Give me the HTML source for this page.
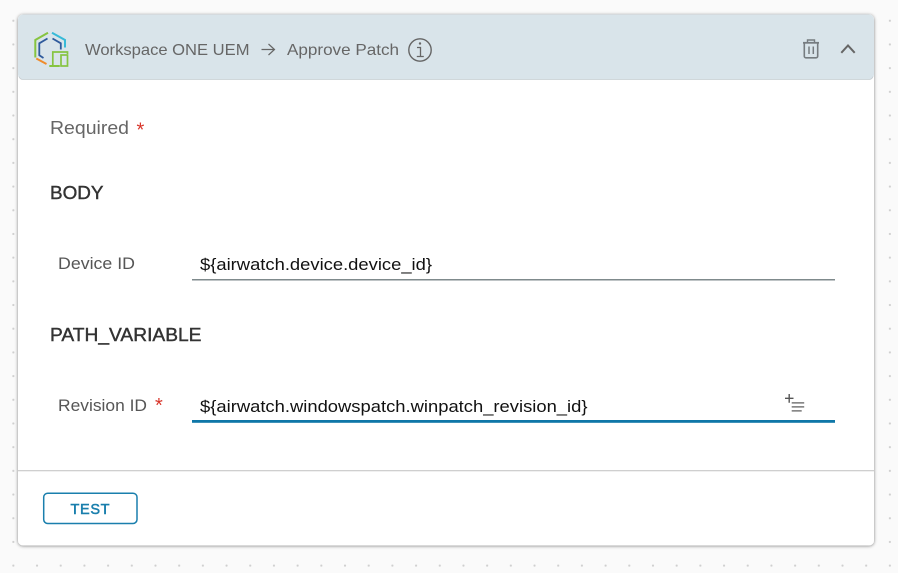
<!DOCTYPE html>
<html>
<head>
<meta charset="utf-8">
<style>
html,body{margin:0;padding:0;width:898px;height:573px;overflow:hidden;background:#fafafa}
svg{display:block}
text{font-family:"Liberation Sans",sans-serif}
</style>
</head>
<body>
<svg width="898" height="573" viewBox="0 0 898 573" xmlns="http://www.w3.org/2000/svg">
<defs>
<pattern id="dots" x="1.5" y="8.9" width="23.69" height="23.69" patternUnits="userSpaceOnUse">
<circle cx="11.85" cy="11.85" r="1.1" fill="#cfcfcf"/>
</pattern>
<filter id="sh" x="-3%" y="-3%" width="106%" height="106%">
<feDropShadow dx="0" dy="0.5" stdDeviation="1.5" flood-color="#000" flood-opacity="0.5"/>
</filter>
</defs>
<rect width="898" height="573" fill="#fafafa"/>
<rect width="898" height="573" fill="url(#dots)"/>

<rect x="18" y="14.500" width="856" height="531" rx="5" fill="#fff" filter="url(#sh)"/>
<path d="M18 74.500V19.500a5 5 0 0 1 5-5H869a5 5 0 0 1 5 5V74.500a5 5 0 0 1-5 5H23a5 5 0 0 1-5-5Z" fill="#d9e4ea"/>
<path d="M19 76.500q1 3 4 3H869q3 0 4-3" fill="none" stroke="#c8ced2" stroke-width="0.8"/>

<!-- logo -->
<g fill="none">
<path d="M48 32.800L35.300 40V57.500" stroke="#86c440" stroke-width="2"/>
<path d="M52 32.800L65 40V47.500" stroke="#37bad8" stroke-width="2"/>
<path d="M47.500 38.500L39.300 43.300V55.300L43.500 58" stroke="#2f5a9c" stroke-width="1.800"/>
<path d="M52.500 38.500L60.800 43.300V49.500" stroke="#2f5a9c" stroke-width="1.800"/>
<path d="M36.300 58.500L46.500 64" stroke="#ef8b2c" stroke-width="1.900"/>
<path d="M67.500 54V52H52.800V65" stroke="#86c440" stroke-width="1.700"/>
<path d="M49.300 66H59.800" stroke="#86c440" stroke-width="2"/>
<rect x="61" y="55" width="6.500" height="11" stroke="#86c440" stroke-width="1.700"/>
</g>

<!-- header text -->
<text x="85" y="55" font-size="16" fill="#666" textLength="164.500" lengthAdjust="spacingAndGlyphs">Workspace ONE UEM</text>
<path d="M261.500 49.500H274.500M268.500 44L274.500 49.500L268.500 55" fill="none" stroke="#666" stroke-width="1.200"/>
<text x="287" y="55" font-size="16" fill="#666" textLength="112" lengthAdjust="spacingAndGlyphs">Approve Patch</text>
<circle cx="420" cy="50" r="11.200" fill="none" stroke="#666" stroke-width="1.400"/>
<path d="M417 47.500H420.500V56.500M416.800 56.500H423.800" fill="none" stroke="#666" stroke-width="1.300"/>
<circle cx="420" cy="43.500" r="1.200" fill="#666"/>

<!-- trash -->
<g fill="none" stroke="#767c80" stroke-width="1.600">
<path d="M803 42.800H819" stroke-width="1.800"/>
<path d="M804.300 43V56.200a1.600 1.600 0 0 0 1.600 1.600H816.100a1.600 1.600 0 0 0 1.600-1.600V43"/>
<path d="M807.500 42.500V40H814.500V42.500" stroke-width="1.400"/>
<path d="M809 46.500V54M813.300 46.500V54" stroke-width="1.500"/>
</g>
<!-- chevron -->
<path d="M841.300 52.800L848 45.500L854.700 52.800" fill="none" stroke="#666" stroke-width="2"/>

<!-- body -->
<text x="50" y="134" font-size="18.500" fill="#666" textLength="79" lengthAdjust="spacingAndGlyphs">Required</text>
<text x="136.500" y="136.500" font-size="20" fill="#d8352a">*</text>

<g fill="#333" stroke="#333" stroke-width="0.4">
<text x="50" y="199" font-size="18" textLength="53.500" lengthAdjust="spacingAndGlyphs">BODY</text>
<text x="50" y="341" font-size="18" textLength="151.500" lengthAdjust="spacingAndGlyphs">PATH_VARIABLE</text>
</g>

<text x="58" y="269" font-size="16.500" fill="#565656" textLength="77" lengthAdjust="spacingAndGlyphs">Device ID</text>
<text x="200" y="270" font-size="17" fill="#111" textLength="232" lengthAdjust="spacingAndGlyphs">${airwatch.device.device_id}</text>
<rect x="192" y="279" width="643" height="1.500" fill="#7f8a8c"/>

<text x="58" y="411" font-size="16.500" fill="#565656" textLength="89" lengthAdjust="spacingAndGlyphs">Revision ID</text>
<text x="155" y="412" font-size="20" fill="#d8352a">*</text>
<text x="200" y="412" font-size="17" fill="#111" textLength="387.500" lengthAdjust="spacingAndGlyphs">${airwatch.windowspatch.winpatch_revision_id}</text>
<rect x="192" y="420" width="643" height="2.800" fill="#0f77a8"/>

<!-- picker icon -->
<path d="M785 398.300H793.500M789.200 394V402.700" fill="none" stroke="#555" stroke-width="1.400"/>
<rect x="791.700" y="402" width="12.500" height="1.700" fill="#888"/>
<rect x="791.700" y="406" width="12.500" height="1.700" fill="#888"/>
<rect x="791.700" y="410" width="10" height="1.700" fill="#888"/>

<!-- footer -->
<rect x="18" y="470" width="856" height="1.300" fill="#cfcfcf"/>
<rect x="43.700" y="493.200" width="93.300" height="30.300" rx="4" fill="#fff" stroke="#1a7fad" stroke-width="1.500"/>
<text x="70.500" y="514" font-size="14.500" fill="#1a7fad" stroke="#1a7fad" stroke-width="0.500" textLength="39" lengthAdjust="spacing">TEST</text>
</svg>
</body>
</html>
